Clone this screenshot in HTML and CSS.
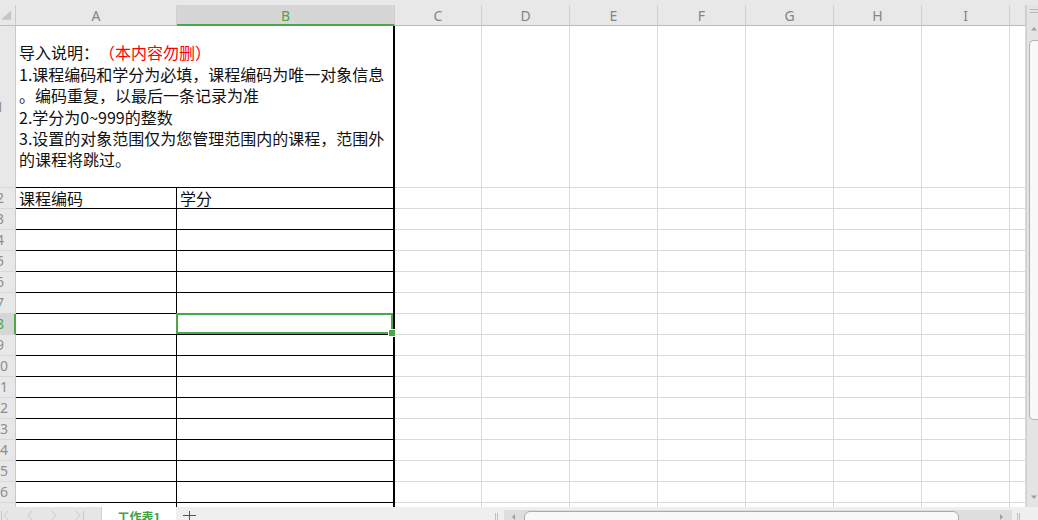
FILE: index.html
```html
<!DOCTYPE html>
<html lang="zh-CN">
<head>
<meta charset="utf-8">
<title>工作表1</title>
<link rel="stylesheet" href="styles.css">
</head>
<body>
<div class="app">
  <div class="topstrip"></div>
  <div class="main">
    <div class="sheet">
      <div class="row hdr">
        <div class="corner"><svg width="16" height="20" viewBox="0 0 16 20"><polygon points="1,15 12,5 12,15" fill="#c6c6c6"/></svg></div>
        <div class="ch">A</div>
        <div class="ch ch-sel">B</div>
        <div class="ch">C</div>
        <div class="ch">D</div>
        <div class="ch">E</div>
        <div class="ch">F</div>
        <div class="ch">G</div>
        <div class="ch">H</div>
        <div class="ch">I</div>
        <div class="ch"></div>
      </div>
      <div class="row r1">
        <div class="rh"><span>1</span></div>
        <div class="cell tab-ab note">
          <div>导入说明：<span class="red">（本内容勿删）</span></div>
          <div>1.课程编码和学分为必填，课程编码为唯一对象信息</div>
          <div>。编码重复，以最后一条记录为准</div>
          <div>2.学分为0~999的整数</div>
          <div>3.设置的对象范围仅为您管理范围内的课程，范围外</div>
          <div>的课程将跳过。</div>
        </div>
        <div class="cell"></div><div class="cell"></div><div class="cell"></div><div class="cell"></div><div class="cell"></div><div class="cell"></div><div class="cell"></div><div class="cell"></div>
      </div>
      <div class="row">
        <div class="rh"><span>2</span></div>
        <div class="cell ta txt">课程编码</div>
        <div class="cell tb txt">学分</div>
        <div class="cell"></div><div class="cell"></div><div class="cell"></div><div class="cell"></div><div class="cell"></div><div class="cell"></div><div class="cell"></div><div class="cell"></div>
      </div>
      <div class="row">
        <div class="rh"><span>3</span></div>
        <div class="cell ta"></div><div class="cell tb"></div>
        <div class="cell"></div><div class="cell"></div><div class="cell"></div><div class="cell"></div><div class="cell"></div><div class="cell"></div><div class="cell"></div><div class="cell"></div>
      </div>
      <div class="row">
        <div class="rh"><span>4</span></div>
        <div class="cell ta"></div><div class="cell tb"></div>
        <div class="cell"></div><div class="cell"></div><div class="cell"></div><div class="cell"></div><div class="cell"></div><div class="cell"></div><div class="cell"></div><div class="cell"></div>
      </div>
      <div class="row">
        <div class="rh"><span>5</span></div>
        <div class="cell ta"></div><div class="cell tb"></div>
        <div class="cell"></div><div class="cell"></div><div class="cell"></div><div class="cell"></div><div class="cell"></div><div class="cell"></div><div class="cell"></div><div class="cell"></div>
      </div>
      <div class="row">
        <div class="rh"><span>6</span></div>
        <div class="cell ta"></div><div class="cell tb"></div>
        <div class="cell"></div><div class="cell"></div><div class="cell"></div><div class="cell"></div><div class="cell"></div><div class="cell"></div><div class="cell"></div><div class="cell"></div>
      </div>
      <div class="row">
        <div class="rh"><span>7</span></div>
        <div class="cell ta"></div><div class="cell tb"></div>
        <div class="cell"></div><div class="cell"></div><div class="cell"></div><div class="cell"></div><div class="cell"></div><div class="cell"></div><div class="cell"></div><div class="cell"></div>
      </div>
      <div class="row">
        <div class="rh rh-sel"><span>8</span></div>
        <div class="cell ta"></div><div class="cell tb sel"></div>
        <div class="cell"></div><div class="cell"></div><div class="cell"></div><div class="cell"></div><div class="cell"></div><div class="cell"></div><div class="cell"></div><div class="cell"></div>
      </div>
      <div class="row">
        <div class="rh"><span>9</span></div>
        <div class="cell ta"></div><div class="cell tb"></div>
        <div class="cell"></div><div class="cell"></div><div class="cell"></div><div class="cell"></div><div class="cell"></div><div class="cell"></div><div class="cell"></div><div class="cell"></div>
      </div>
      <div class="row">
        <div class="rh"><span>10</span></div>
        <div class="cell ta"></div><div class="cell tb"></div>
        <div class="cell"></div><div class="cell"></div><div class="cell"></div><div class="cell"></div><div class="cell"></div><div class="cell"></div><div class="cell"></div><div class="cell"></div>
      </div>
      <div class="row">
        <div class="rh"><span>11</span></div>
        <div class="cell ta"></div><div class="cell tb"></div>
        <div class="cell"></div><div class="cell"></div><div class="cell"></div><div class="cell"></div><div class="cell"></div><div class="cell"></div><div class="cell"></div><div class="cell"></div>
      </div>
      <div class="row">
        <div class="rh"><span>12</span></div>
        <div class="cell ta"></div><div class="cell tb"></div>
        <div class="cell"></div><div class="cell"></div><div class="cell"></div><div class="cell"></div><div class="cell"></div><div class="cell"></div><div class="cell"></div><div class="cell"></div>
      </div>
      <div class="row">
        <div class="rh"><span>13</span></div>
        <div class="cell ta"></div><div class="cell tb"></div>
        <div class="cell"></div><div class="cell"></div><div class="cell"></div><div class="cell"></div><div class="cell"></div><div class="cell"></div><div class="cell"></div><div class="cell"></div>
      </div>
      <div class="row">
        <div class="rh"><span>14</span></div>
        <div class="cell ta"></div><div class="cell tb"></div>
        <div class="cell"></div><div class="cell"></div><div class="cell"></div><div class="cell"></div><div class="cell"></div><div class="cell"></div><div class="cell"></div><div class="cell"></div>
      </div>
      <div class="row">
        <div class="rh"><span>15</span></div>
        <div class="cell ta"></div><div class="cell tb"></div>
        <div class="cell"></div><div class="cell"></div><div class="cell"></div><div class="cell"></div><div class="cell"></div><div class="cell"></div><div class="cell"></div><div class="cell"></div>
      </div>
      <div class="row">
        <div class="rh"><span>16</span></div>
        <div class="cell ta"></div><div class="cell tb"></div>
        <div class="cell"></div><div class="cell"></div><div class="cell"></div><div class="cell"></div><div class="cell"></div><div class="cell"></div><div class="cell"></div><div class="cell"></div>
      </div>
      <div class="row">
        <div class="rh"><span>17</span></div>
        <div class="cell ta"></div><div class="cell tb"></div>
        <div class="cell"></div><div class="cell"></div><div class="cell"></div><div class="cell"></div><div class="cell"></div><div class="cell"></div><div class="cell"></div><div class="cell"></div>
      </div>
    </div>
    <div class="vscroll">
      <svg class="vgrip" width="12" height="6" viewBox="0 0 12 6"><line x1="3" y1="1.5" x2="12" y2="1.5" stroke="#b8b8b8"/><line x1="3" y1="4.5" x2="12" y2="4.5" stroke="#b8b8b8"/></svg>
      <svg class="vup" width="12" height="5" viewBox="0 0 12 5"><polygon points="4,4.5 7,1 10,4.5" fill="#a0a0a0"/></svg>
      <div class="vthumb"></div>
      <svg class="vdown" width="12" height="5" viewBox="0 0 12 5"><polygon points="4,0.5 7,4 10,0.5" fill="#a0a0a0"/></svg>
    </div>
  </div>
  <div class="bar">
    <div class="nav">
      <svg width="101" height="13" viewBox="0 0 101 13">
        <g fill="none" stroke="#c8c8c8" stroke-width="1">
          <line x1="1.5" y1="4" x2="1.5" y2="13"/>
          <polyline points="8,4 4,8.5 8,13"/>
          <polyline points="32,4 28,8.5 32,13"/>
          <polyline points="52,4 56,8.5 52,13"/>
          <polyline points="76,4 80,8.5 76,13"/>
          <line x1="83.5" y1="4" x2="83.5" y2="13"/>
        </g>
      </svg>
    </div>
    <div class="tab">工作表1</div>
    <svg class="add" width="13" height="13" viewBox="0 0 13 13"><g stroke="#555" stroke-width="1"><line x1="0" y1="8.5" x2="13" y2="8.5"/><line x1="6.5" y1="4" x2="6.5" y2="13"/></g></svg>
    <svg class="split" width="6" height="13" viewBox="0 0 6 13"><g stroke="#c0c0c0"><line x1="1.5" y1="6" x2="1.5" y2="13"/><line x1="3.5" y1="6" x2="3.5" y2="13"/></g></svg>
    <div class="hscroll">
      <svg class="harrow" width="20" height="10" viewBox="0 0 20 10"><polygon points="11,4 8,7 11,10" fill="#a0a0a0"/></svg>
      <div class="hthumb"></div>
      <svg class="harrow-r" width="10" height="10" viewBox="0 0 10 10"><polygon points="3,4 6,7 3,10" fill="#a0a0a0"/></svg>
    </div>
    <svg class="split split2" width="6" height="13" viewBox="0 0 6 13"><g stroke="#c0c0c0"><line x1="1.5" y1="6" x2="1.5" y2="13"/><line x1="3.5" y1="6" x2="3.5" y2="13"/></g></svg>
  </div>
</div>
</body>
</html>
```

FILE: styles.css
```css
* { box-sizing: border-box; }
html, body { margin: 0; padding: 0; }
body {
  width: 1038px;
  height: 520px;
  overflow: hidden;
  background: #ffffff;
  font-family: "Noto Sans CJK SC", "Noto Sans", sans-serif;
  text-spacing-trim: space-all;
}
.app { width: 1038px; height: 520px; display: flex; flex-direction: column; }
.topstrip { height: 5px; background: #e8e8e8; flex: none; }
.main { height: 502px; display: flex; overflow: hidden; flex: none; }
.sheet { width: 1026px; overflow: hidden; flex: none; }
.row {
  display: grid;
  grid-template-columns: 16px 161px 218px 87px repeat(6, 88px) 16px;
  height: 21px;
}
.hdr { background: #e8e8e8; }
.corner {
  border-right: 1px solid #cbcbcb;
  border-bottom: 1px solid #bcbcbc;
  display: flex;
  align-items: flex-start;
}
.ch {
  border-right: 1px solid #d0d0d0;
  border-bottom: 1px solid #bcbcbc;
  display: flex;
  align-items: center;
  justify-content: center;
  font-family: "Noto Sans", "Liberation Sans", sans-serif;
  font-size: 14px;
  color: #858585;
  line-height: 1;
  padding-top: 1px;
}
.ch-sel {
  background: #d6d6d6;
  border-bottom: 2px solid #4aa84a;
  color: #4aa84a;
  padding-top: 2px;
}
.r1 { height: 162px; }
.rh {
  background: #e8e8e8;
  border-right: 1px solid #c8c8c8;
  border-bottom: 1px solid #d8d8d8;
  overflow: hidden;
  display: flex;
  align-items: center;
}
.rh span {
  flex: none;
  width: 30px;
  margin-left: -15px;
  text-align: center;
  font-family: "Noto Sans", "Liberation Sans", sans-serif;
  font-size: 14px;
  line-height: 1;
  color: #8e8e8e;
}
.rh-sel {
  background: #d6d6d6;
  border-right: 2px solid #4aa84a;
}
.rh-sel span { color: #4aa84a; }
.cell {
  border-right: 1px solid #dadada;
  border-bottom: 1px solid #dadada;
}
.tab-ab {
  grid-column: span 2;
  border-right: 2px solid #000;
  border-bottom: 1px solid #000;
}
.ta { border-right-color: #000; border-bottom-color: #000; }
.tb { border-right: 2px solid #000; border-bottom: 1px solid #000; }
.note {
  display: flex;
  flex-direction: column;
  justify-content: center;
  padding-left: 3px;
  font-size: 16px;
  line-height: 21.4px;
  color: #111;
  white-space: nowrap;
}
.red { color: #ff0000; }
.txt {
  display: flex;
  align-items: center;
  padding-left: 3px;
  font-size: 16px;
  line-height: 20px;
  color: #111;
  white-space: nowrap;
}
.sel { position: relative; }
.sel::after {
  content: "";
  position: absolute;
  left: -1px;
  top: -1px;
  right: 0;
  bottom: 0;
  border: 2px solid #4aa84a;
}
.sel::before {
  content: "";
  position: absolute;
  right: -3px;
  bottom: -3px;
  width: 6px;
  height: 6px;
  background: #4aa84a;
  border: 1px solid #fff;
  z-index: 2;
}
.vscroll {
  width: 12px;
  flex: none;
  background: #e4e4e4;
  border-left: 1px solid #d0d0d0;
  display: flex;
  flex-direction: column;
}
.vgrip { display: block; margin-top: 3px; flex: none; }
.vup { display: block; margin-top: 12px; flex: none; }
.vthumb {
  flex: none;
  margin-top: 9px;
  margin-left: 2px;
  height: 380px;
  background: #f8f8f8;
  border: 1px solid #b4b4b4;
  border-right: none;
  border-radius: 5px 0 0 5px;
}
.vdown { display: block; margin-top: 75px; flex: none; }
.bar {
  height: 13px;
  flex: none;
  background: #efefef;
  display: flex;
  overflow: hidden;
}
.nav {
  width: 102px;
  flex: none;
  background: #e6e6e6;
  border-right: 1px solid #d2d2d2;
}
.nav svg { display: block; }
.tab {
  width: 74px;
  flex: none;
  background: #ffffff;
  color: #3fa23f;
  font-weight: 700;
  font-size: 12px;
  line-height: 14px;
  padding-top: 3px;
  text-align: center;
  white-space: nowrap;
}
.add { display: block; flex: none; margin-left: 7px; }
.split { display: block; flex: none; margin-left: 298px; }
.split2 { margin-left: 4px; }
.hscroll {
  width: 508px;
  flex: none;
  margin-left: 4px;
  margin-top: 3px;
  background: #dedede;
  display: flex;
  align-items: flex-start;
}
.harrow { display: block; flex: none; }
.hthumb {
  flex: none;
  width: 435px;
  height: 14px;
  margin-top: 1px;
  background: #f8f8f8;
  border: 1px solid #aaaaaa;
  border-radius: 6px 6px 0 0;
}
.harrow-r { display: block; flex: none; margin-left: 38px; }
```
